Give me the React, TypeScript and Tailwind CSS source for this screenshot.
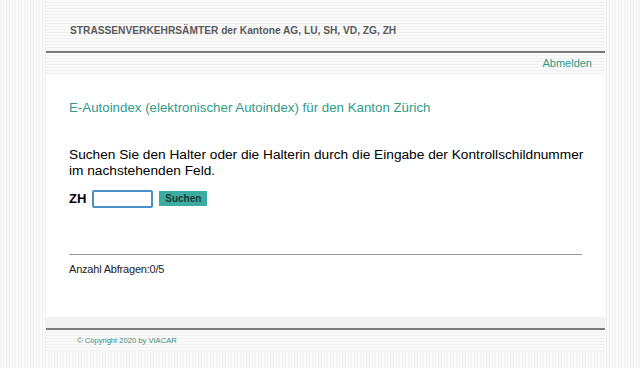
export default function App() {
  return (
    <div className="w-[640px] h-[368px] overflow-hidden bg-[repeating-linear-gradient(90deg,#eeeeee_0px,#eeeeee_1px,#fbfbfb_1px,#fbfbfb_3px)] font-['Liberation_Sans',Arial,sans-serif]">
      <div className="ml-[46px] w-[559px]">
        {/* Kopfzeile */}
        <div className="h-[51px] bg-[repeating-linear-gradient(0deg,#f1f1f1_0px,#f1f1f1_1px,#fafafa_1px,#fafafa_3px)] pl-[24px] pt-[25px]">
          <p className="text-[10.2px] font-bold text-[#5a5a5a] leading-[12px]">
            STRASSENVERKEHRSÄMTER der Kantone AG, LU, SH, VD, ZG, ZH
          </p>
        </div>
        <div className="h-[2px] bg-[#7a7a7a]" />
        <div className="h-[21px] bg-[repeating-linear-gradient(0deg,#f1f1f1_0px,#f1f1f1_1px,#fafafa_1px,#fafafa_3px)] flex items-center justify-end pr-[13px]">
          <a className="text-[11px] text-[#2f9a88] leading-none">Abmelden</a>
        </div>

        {/* Inhalt */}
        <div className="h-[243px] bg-white pl-[23px] pr-[23px] pt-[26px]">
          <h1 className="text-[13.3px] text-[#2f9a88] leading-[15px]">
            E-Autoindex (elektronischer Autoindex) für den Kanton Zürich
          </h1>
          <p className="mt-[32px] text-[13.7px] text-black leading-[16px] whitespace-nowrap">
            Suchen Sie den Halter oder die Halterin durch die Eingabe der Kontrollschildnummer
            <br />
            im nachstehenden Feld.
          </p>
          <div className="mt-[10px] flex items-center">
            <span className="text-[13px] font-bold text-black">ZH</span>
            <input
              className="ml-[6px] w-[61px] h-[18px] border-2 border-[#4a90c8] rounded-[2px] bg-white outline-none"
              defaultValue=""
            />
            <button className="ml-[6px] h-[15px] w-[48px] bg-[#3aaca0] text-[10px] font-bold text-[#1a3a38] leading-none">
              Suchen
            </button>
          </div>
          <div className="mt-[45px] h-px bg-[#999999]" />
          <p className="mt-[8px] text-[11px] text-[#222222] leading-[13px] tracking-[-0.2px]">Anzahl Abfragen:0/5</p>
        </div>

        {/* Fusszeile */}
        <div className="h-[11px] bg-[#f2f2f2]" />
        <div className="h-[2px] bg-[#7a7a7a]" />
        <div className="h-[21px] bg-[repeating-linear-gradient(0deg,#f1f1f1_0px,#f1f1f1_1px,#fafafa_1px,#fafafa_3px)] pl-[31px] flex items-center">
          <span className="text-[7.6px] text-[#3b8f80] leading-none">© Copyright 2020 by VIACAR</span>
        </div>
      </div>
    </div>
  );
}
